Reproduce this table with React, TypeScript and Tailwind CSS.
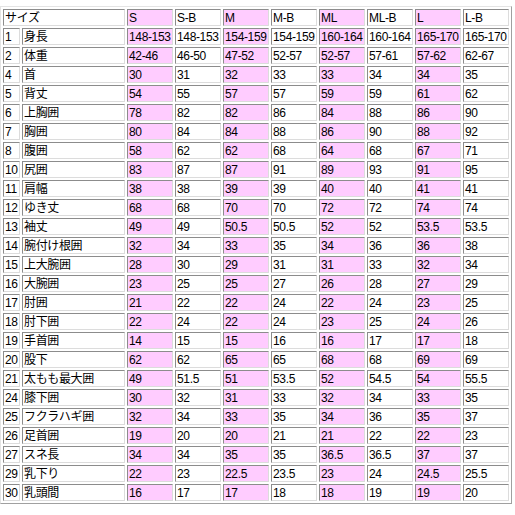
const sizes = ["S", "S-B", "M", "M-B", "ML", "ML-B", "L", "L-B"];

// [番号, 部位, S, S-B, M, M-B, ML, ML-B, L, L-B]
const rows: string[][] = [
  ["1", "身長", "148-153", "148-153", "154-159", "154-159", "160-164", "160-164", "165-170", "165-170"],
  ["2", "体重", "42-46", "46-50", "47-52", "52-57", "52-57", "57-61", "57-62", "62-67"],
  ["4", "首", "30", "31", "32", "33", "33", "34", "34", "35"],
  ["5", "背丈", "54", "55", "57", "57", "59", "59", "61", "62"],
  ["6", "上胸囲", "78", "82", "82", "86", "84", "88", "86", "90"],
  ["7", "胸囲", "80", "84", "84", "88", "86", "90", "88", "92"],
  ["8", "腹囲", "58", "62", "62", "68", "64", "68", "67", "71"],
  ["10", "尻囲", "83", "87", "87", "91", "89", "93", "91", "95"],
  ["11", "肩幅", "38", "38", "39", "39", "40", "40", "41", "41"],
  ["12", "ゆき丈", "68", "68", "70", "70", "72", "72", "74", "74"],
  ["13", "袖丈", "49", "49", "50.5", "50.5", "52", "52", "53.5", "53.5"],
  ["14", "腕付け根囲", "32", "34", "33", "35", "34", "36", "36", "38"],
  ["15", "上大腕囲", "28", "30", "29", "31", "31", "33", "32", "34"],
  ["16", "大腕囲", "23", "25", "25", "27", "26", "28", "27", "29"],
  ["17", "肘囲", "21", "22", "22", "24", "22", "24", "23", "25"],
  ["18", "肘下囲", "22", "24", "22", "24", "23", "25", "24", "26"],
  ["19", "手首囲", "14", "15", "15", "16", "16", "17", "17", "18"],
  ["20", "股下", "62", "62", "65", "65", "68", "68", "69", "69"],
  ["21", "太もも最大囲", "49", "51.5", "51", "53.5", "52", "54.5", "54", "55.5"],
  ["24", "膝下囲", "30", "32", "31", "33", "32", "34", "33", "35"],
  ["25", "フクラハギ囲", "32", "34", "33", "35", "34", "36", "35", "37"],
  ["26", "足首囲", "19", "20", "20", "21", "21", "22", "22", "23"],
  ["27", "スネ長", "34", "34", "35", "35", "36.5", "36.5", "37", "37"],
  ["29", "乳下り", "22", "23", "22.5", "23.5", "23", "24", "24.5", "25.5"],
  ["30", "乳頭間", "16", "17", "17", "18", "18", "19", "19", "20"],
];

const cell =
  "h-[17px] border border-t-[#8c8c8c] border-l-[#8c8c8c] border-b-[#dcdcdc] border-r-[#dcdcdc] px-[1px] text-[12px] leading-[16px] tracking-[-0.35px] whitespace-nowrap overflow-hidden text-black";

const Cell = ({ text, pink, span }: { text: string; pink?: boolean; span?: boolean }) => (
  <div className={`${cell} ${pink ? "bg-[#ffccff]" : "bg-white"} ${span ? "col-span-2" : ""}`}>
    {text}
  </div>
);

export default function App() {
  return (
    <div
      className="min-h-[515px] w-[515px] bg-white pt-[6px]"
      style={{ fontFamily: '"Liberation Sans", "Noto Sans CJK JP", sans-serif' }}
    >
      <div className="grid w-[512px] grid-cols-[17px_103px_repeat(8,46px)] gap-[2px] border border-t-[#e4e4e4] border-l-[#e4e4e4] border-b-[#a0a0a0] border-r-[#a0a0a0] p-[2px]">
        <Cell text="サイズ" span />
        {sizes.map((s, i) => (
          <Cell key={s} text={s} pink={i % 2 === 0} />
        ))}
        {rows.map((r) =>
          r.map((v, i) => (
            <Cell key={r[0] + "-" + i} text={v} pink={i >= 2 && (i - 2) % 2 === 0} />
          ))
        )}
      </div>
    </div>
  );
}
